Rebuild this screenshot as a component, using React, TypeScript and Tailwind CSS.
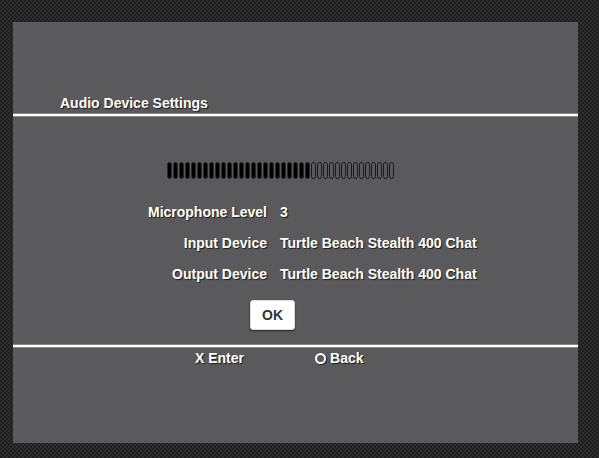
const filled = 24;
const total = 38;

const shadow = '[text-shadow:1px_1px_1px_rgba(0,0,0,0.7)]';

export default function App() {
  const rows = [
    { label: 'Microphone Level', value: '3' },
    { label: 'Input Device', value: 'Turtle Beach Stealth 400 Chat' },
    { label: 'Output Device', value: 'Turtle Beach Stealth 400 Chat' },
  ];

  return (
    <div className="w-[599px] h-[458px] pt-[22px] pl-[13px] bg-[#262626] bg-[repeating-conic-gradient(#2e2e2e_0_25%,#1f1f1f_0_50%)] bg-[length:4px_4px] font-['Liberation_Sans',Arial,sans-serif] font-bold text-white">
      <div className="w-[565px] h-[421px] bg-[#5a5a5c] flex flex-col">
        {/* Title */}
        <div className={`pt-[73px] pl-[47px] text-[14px] leading-[16px] ${shadow}`}>
          Audio Device Settings
        </div>
        <div className="mt-[2px] h-[4px] bg-white border-y border-[#8a8a8a]" />

        {/* Level meter */}
        <div className="mt-[45px] pl-[154px] flex gap-[1.5px]">
          {Array.from({ length: total }).map((_, i) =>
            i < filled ? (
              <div key={i} className="w-[4.5px] h-[17px] rounded-full bg-black border border-[#2a2a2a]" />
            ) : (
              <div key={i} className="w-[4.5px] h-[17px] rounded-full border-[1.5px] border-[#1a1a1a]" />
            )
          )}
        </div>

        {/* Settings rows */}
        <div className="mt-[18px] flex flex-col">
          {rows.map((r) => (
            <div key={r.label} className={`h-[31px] flex items-center text-[14px] ${shadow}`}>
              <div className="w-[254px] text-right">{r.label}</div>
              <div className="ml-[13px]">{r.value}</div>
            </div>
          ))}
        </div>

        {/* OK button */}
        <div className="mt-[10px] ml-[237px] w-[45px] h-[30px] rounded-[3px] bg-white border border-[#ddd] shadow-[0_1px_2px_rgba(0,0,0,0.6)] flex items-center justify-center text-[14px] text-[#333]">
          OK
        </div>

        <div className="mt-[14px] h-[4px] bg-white border-y border-[#8a8a8a]" />

        {/* Footer */}
        <div className={`mt-[2px] flex items-center text-[14px] leading-[16px] ${shadow}`}>
          <div className="ml-[182px]">X Enter</div>
          <div className="ml-[71px] w-[11px] h-[11px] rounded-full border-2 border-white shadow-[1px_1px_1px_rgba(0,0,0,0.6)]" />
          <div className="ml-[4px]">Back</div>
        </div>
      </div>
    </div>
  );
}
